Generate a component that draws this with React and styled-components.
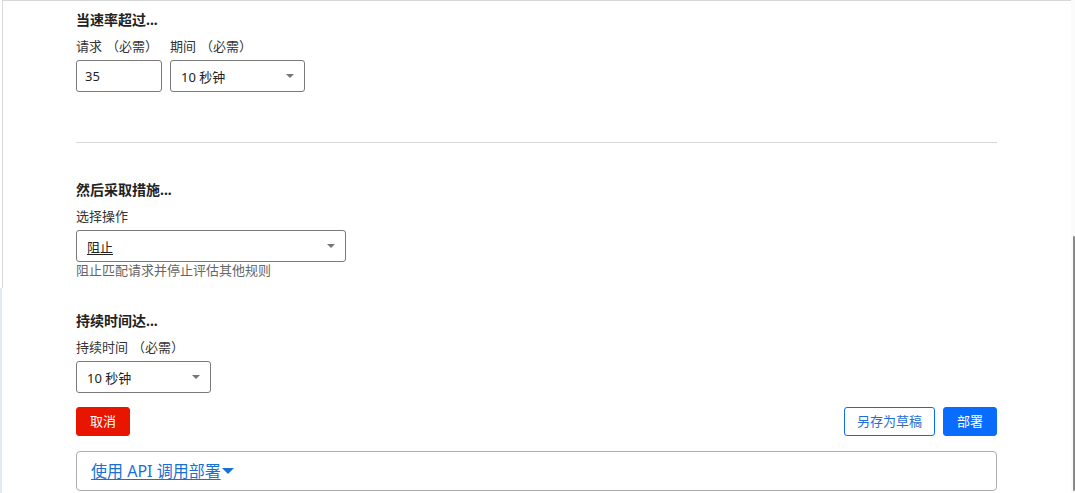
import React from "react";
import styled, { createGlobalStyle } from "styled-components";

const Global = createGlobalStyle`
  html, body { margin: 0; padding: 0; background: #fff; }
  body {
    font-family: "Noto Sans", "Noto Sans CJK SC", sans-serif;
    font-size: 13px;
    color: #333;
    overflow: hidden;
  }
  * { box-sizing: border-box; }
`;

const Page = styled.div`
  position: relative;
  width: 1075px;
  height: 493px;
  display: flex;
`;

const Gutter = styled.div`
  width: 2px;
  flex: none;
  background: linear-gradient(to bottom, #fff 0, #fff 288px, #e3e9f2 288px, #e3e9f2 100%);
`;

const Panel = styled.div`
  position: relative;
  width: 1069px;
  flex: none;
  border-top: 1px solid #d6d6d6;
  padding: 9px 0 0 74px;
  &::before {
    content: "";
    position: absolute;
    left: 0;
    top: 0;
    width: 1px;
    height: 287px;
    background: #d9d9d9;
  }
`;

const RightEdge = styled.div`
  flex: 1;
  background: #fbfbfb;
  position: relative;
`;

const ScrollThumb = styled.div`
  position: absolute;
  left: 2px;
  top: 236px;
  bottom: 2px;
  width: 2px;
  background: #8a8a8a;
  border-radius: 1px;
`;

const Content = styled.div`
  width: 921px;
  display: flex;
  flex-direction: column;
`;

const Heading = styled.div`
  font-weight: 700;
  font-size: 14px;
  line-height: 20px;
  color: #222;
  margin-top: ${(p) => p.$mt || 0}px;
`;

const Label = styled.div`
  font-size: 13px;
  line-height: 18px;
  color: #333;
  white-space: nowrap;
  margin-top: 7px;
  margin-bottom: 5px;
`;

const Req = styled.span`
  margin-left: 4px;
`;

const Row = styled.div`
  display: flex;
  gap: 8px;
  align-items: flex-end;
`;

const Field = styled.div`
  display: flex;
  flex-direction: column;
`;

const Box = styled.div`
  width: ${(p) => p.$w}px;
  height: ${(p) => p.$h || 32}px;
  border: 1px solid #7a7a7a;
  border-radius: 3px;
  display: flex;
  align-items: center;
  padding: 0 10px 0 ${(p) => p.$pl || 10}px;
  font-size: 13px;
  color: #222;
  background: #fff;
`;

const BoxText = styled.span`
  flex: 1;
  text-decoration: ${(p) => (p.$u ? "underline" : "none")};
  text-underline-offset: 2px;
`;

const Caret = styled.span`
  width: 0;
  height: 0;
  border-left: 4px solid transparent;
  border-right: 4px solid transparent;
  border-top: 4px solid #757575;
`;

const Divider = styled.div`
  height: 1px;
  background: #d6d6d6;
  margin-top: 50px;
`;

const Help = styled.div`
  font-size: 13px;
  line-height: 17px;
  color: #666;
`;

const Actions = styled.div`
  display: flex;
  align-items: center;
  margin-top: 14px;
  gap: 8px;
`;

const Spacer = styled.div`
  flex: 1;
`;

const Btn = styled.button`
  height: 29px;
  padding: 0 ${(p) => p.$px || 13}px;
  border-radius: 3px;
  font-family: inherit;
  font-size: 13px;
  line-height: 1;
  cursor: pointer;
  border: 1px solid ${(p) => (p.$kind === "danger" ? "#e81500" : "#0a6cff")};
  background: ${(p) =>
    p.$kind === "danger" ? "#e81500" : p.$kind === "primary" ? "#0a6cff" : "#fff"};
  color: ${(p) => (p.$kind === "outline" ? "#1f6fd6" : "#fff")};
`;

const ApiBox = styled.div`
  margin-top: 15px;
  height: 40px;
  border: 1px solid #adadad;
  border-radius: 4px;
  display: flex;
  align-items: center;
  padding-left: 14px;
`;

const ApiLink = styled.a`
  color: #1a6fd4;
  font-size: 16px;
  line-height: 20px;
  text-decoration: underline;
  text-underline-offset: 2px;
  display: flex;
  align-items: center;
  cursor: pointer;
`;

const LinkCaret = styled.span`
  width: 0;
  height: 0;
  margin-left: 1px;
  border-left: 6px solid transparent;
  border-right: 6px solid transparent;
  border-top: 6px solid #1a6fd4;
`;

function Select({ w, value, u }) {
  return (
    <Box $w={w}>
      <BoxText $u={u}>{value}</BoxText>
      <Caret />
    </Box>
  );
}

export default function App() {
  return (
    <>
      <Global />
      <Page>
        <Gutter />
        <Panel>
          <Content>
            <Heading>当速率超过...</Heading>
            <Row>
              <Field>
                <Label>
                  请求<Req>（必需）</Req>
                </Label>
                <Box $w={86} $pl={8}>
                  <BoxText>35</BoxText>
                </Box>
              </Field>
              <Field>
                <Label>
                  期间<Req>（必需）</Req>
                </Label>
                <Select w={135} value="10 秒钟" />
              </Field>
            </Row>
            <Divider />
            <Heading $mt={37}>然后采取措施...</Heading>
            <Label>选择操作</Label>
            <Select w={270} value="阻止" u />
            <Help>阻止匹配请求并停止评估其他规则</Help>
            <Heading $mt={32}>持续时间达...</Heading>
            <Label>
              持续时间<Req>（必需）</Req>
            </Label>
            <Select w={135} value="10 秒钟" />
            <Actions>
              <Btn $kind="danger">取消</Btn>
              <Spacer />
              <Btn $kind="outline" $px={12}>另存为草稿</Btn>
              <Btn $kind="primary">部署</Btn>
            </Actions>
            <ApiBox>
              <ApiLink>
                使用 API 调用部署
                <LinkCaret />
              </ApiLink>
            </ApiBox>
          </Content>
        </Panel>
        <RightEdge>
          <ScrollThumb />
        </RightEdge>
      </Page>
    </>
  );
}
